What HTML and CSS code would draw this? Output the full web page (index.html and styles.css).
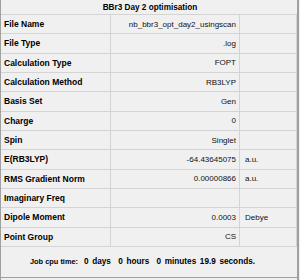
FILE: index.html
```html
<!DOCTYPE html>
<html>
<head>
<meta charset="utf-8">
<link rel="stylesheet" href="styles.css">
</head>
<body>
<div class="panel">
  <div class="title">BBr3 Day 2 optimisation</div>
  <div class="grid">
    <div class="row"><div class="k">File Name</div><div class="v">nb_bbr3_opt_day2_usingscan</div><div class="u"></div></div>
    <div class="row"><div class="k">File Type</div><div class="v">.log</div><div class="u"></div></div>
    <div class="row"><div class="k">Calculation Type</div><div class="v">FOPT</div><div class="u"></div></div>
    <div class="row"><div class="k">Calculation Method</div><div class="v">RB3LYP</div><div class="u"></div></div>
    <div class="row"><div class="k">Basis Set</div><div class="v">Gen</div><div class="u"></div></div>
    <div class="row"><div class="k">Charge</div><div class="v">0</div><div class="u"></div></div>
    <div class="row"><div class="k">Spin</div><div class="v">Singlet</div><div class="u"></div></div>
    <div class="row"><div class="k">E(RB3LYP)</div><div class="v">-64.43645075</div><div class="u">a.u.</div></div>
    <div class="row"><div class="k">RMS Gradient Norm</div><div class="v">0.00000866</div><div class="u">a.u.</div></div>
    <div class="row"><div class="k">Imaginary Freq</div><div class="v"></div><div class="u"></div></div>
    <div class="row"><div class="k">Dipole Moment</div><div class="v">0.0003</div><div class="u">Debye</div></div>
    <div class="row"><div class="k">Point Group</div><div class="v">CS</div><div class="u"></div></div>
  </div>
  <div class="footer"><span class="fl">Job cpu time:</span><span class="fv">0 days  0 hours  0 minutes 19.9 seconds.</span></div>
</div>
</body>
</html>
```
FILE: styles.css
```css
html, body {
  margin: 0;
  padding: 0;
  background: #f0f0f0;
}
body {
  font-family: "Liberation Sans", Arial, sans-serif;
  font-size: 8px;
  color: #000;
}
.panel {
  width: 299px;
  height: 280px;
  box-sizing: border-box;
  border-left: 1px solid #a0a0a0;
  border-right: 2px solid #a0a0a0;
  display: flex;
  flex-direction: column;
}
.title {
  height: 15px;
  box-sizing: border-box;
  border-bottom: 1px solid #d4d4d4;
  text-align: center;
  font-weight: bold;
  font-size: 8.2px;
  line-height: 15px;
  padding-left: 2px;
}
.grid {
  display: grid;
  grid-template-rows: repeat(12, 19.333px);
}
.row {
  display: grid;
  grid-template-columns: 110px 129px 57px;
  border-bottom: 1px solid #d4d4d4;
  box-sizing: border-box;
}
.row > div {
  border-right: 1px solid #d4d4d4;
  display: flex;
  align-items: center;
  white-space: nowrap;
  overflow: hidden;
}
.k {
  font-weight: bold;
  font-size: 8.5px;
  padding-left: 3px;
}
.v {
  justify-content: flex-end;
  padding-right: 3px;
  color: #111;
}
.u {
  padding-left: 5px;
  color: #111;
}
.footer {
  flex: 1;
  border-bottom: 1px solid #a0a0a0;
  margin-bottom: 2px;
  display: flex;
  align-items: center;
  padding-left: 29px;
  font-weight: bold;
  font-size: 8.2px;
  white-space: pre;
}
.fl {
  flex: 0 0 54px;
  font-size: 7.4px;
}
.fv {
  word-spacing: 1.4px;
}
```
